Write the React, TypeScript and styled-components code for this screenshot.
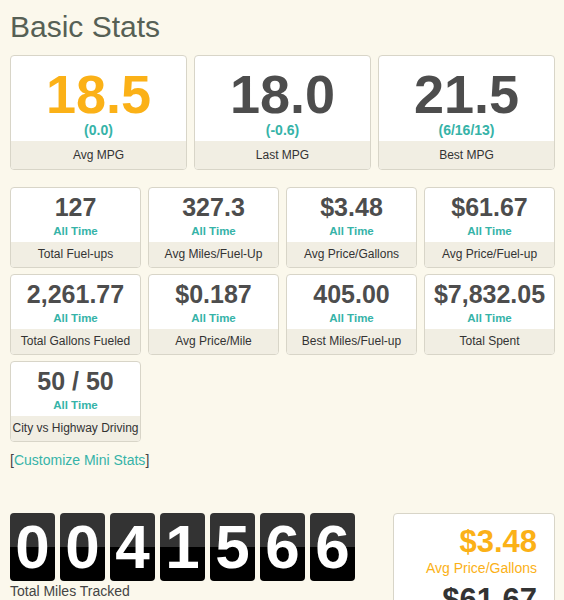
import React from "react";
import styled, { createGlobalStyle } from "styled-components";

const GlobalStyle = createGlobalStyle`
  html, body {
    margin: 0;
    padding: 0;
    background: #fbf8ec;
  }
  body {
    font-family: "Liberation Sans", Arial, sans-serif;
    color: #333;
  }
`;

const Page = styled.div`
  width: 545px;
  padding: 8px 10px 0 10px;
`;

const Title = styled.h1`
  margin: 0 0 9px 0;
  font-size: 30px;
  font-weight: normal;
  line-height: 38px;
  color: #566055;
`;

const BigGrid = styled.div`
  display: grid;
  grid-template-columns: repeat(3, 1fr);
  gap: 7px;
  margin-bottom: 17px;
`;

const SmallGrid = styled.div`
  display: grid;
  grid-template-columns: repeat(4, 1fr);
  gap: 6px 7px;
`;

const Card = styled.div`
  background: #fff;
  border: 1px solid #d8d5c8;
  border-radius: 4px;
  overflow: hidden;
  text-align: center;
  display: flex;
  flex-direction: column;
`;

const BigTop = styled.div`
  padding: 10px 0 3px;
`;

const BigValue = styled.div<{ $accent?: boolean }>`
  font-size: 54px;
  font-weight: bold;
  line-height: 56px;
  color: ${(p) => (p.$accent ? "#fbb117" : "#4d4d4d")};
`;

const BigSub = styled.div`
  font-size: 14px;
  font-weight: bold;
  line-height: 16px;
  color: #36b3a8;
`;

const SmallTop = styled.div`
  padding: 4px 0 2px;
`;

const SmallValue = styled.div`
  font-size: 25px;
  font-weight: bold;
  line-height: 30px;
  color: #4d4d4d;
`;

const SmallSub = styled.div`
  font-size: 11.5px;
  font-weight: bold;
  line-height: 18px;
  color: #36b3a8;
`;

const Label = styled.div<{ $h: number }>`
  background: #f1eee3;
  height: ${(p) => p.$h}px;
  line-height: ${(p) => p.$h}px;
  font-size: 12px;
  color: #333;
  white-space: nowrap;
`;

const Customize = styled.div`
  margin-top: 10px;
  font-size: 14px;
  line-height: 16px;
  color: #444;

  a {
    color: #36b3a8;
    text-decoration: none;
  }
`;

const BottomRow = styled.div`
  display: flex;
  justify-content: space-between;
  align-items: flex-start;
  margin-top: 45px;
`;

const Odometer = styled.div`
  display: flex;
  flex-direction: column;
`;

const Digits = styled.div`
  display: flex;
  gap: 5px;
`;

const Digit = styled.div`
  width: 45px;
  height: 68px;
  border-radius: 4px;
  background: linear-gradient(to bottom, #333 0, #333 50%, #000 50%, #000 100%);
  color: #fff;
  font-size: 62px;
  font-weight: bold;
  line-height: 68px;
  text-align: center;
`;

const OdoLabel = styled.div`
  font-size: 14px;
  line-height: 18px;
  margin-top: 1px;
  color: #444;
`;

const SideCard = styled.div`
  width: 143px;
  height: 120px;
  background: #fff;
  border: 1px solid #d8d5c8;
  border-radius: 4px;
  padding: 10px 17px 0 0;
  text-align: right;
`;

const SideValue = styled.div<{ $accent?: boolean }>`
  font-size: 31px;
  font-weight: bold;
  line-height: 36px;
  color: ${(p) => (p.$accent ? "#fbb117" : "#333")};
`;

const SideLabel = styled.div`
  font-size: 14px;
  line-height: 16px;
  color: #fbb117;
  margin-bottom: 6px;
`;

const bigStats = [
  { value: "18.5", sub: "(0.0)", label: "Avg MPG", accent: true },
  { value: "18.0", sub: "(-0.6)", label: "Last MPG" },
  { value: "21.5", sub: "(6/16/13)", label: "Best MPG" },
];

const miniStats = [
  { value: "127", label: "Total Fuel-ups" },
  { value: "327.3", label: "Avg Miles/Fuel-Up" },
  { value: "$3.48", label: "Avg Price/Gallons" },
  { value: "$61.67", label: "Avg Price/Fuel-up" },
  { value: "2,261.77", label: "Total Gallons Fueled" },
  { value: "$0.187", label: "Avg Price/Mile" },
  { value: "405.00", label: "Best Miles/Fuel-up" },
  { value: "$7,832.05", label: "Total Spent" },
  { value: "50 / 50", label: "City vs Highway Driving" },
];

const miles = "0041566";

export default function App() {
  return (
    <Page>
      <GlobalStyle />
      <Title>Basic Stats</Title>
      <BigGrid>
        {bigStats.map((s) => (
          <Card key={s.label}>
            <BigTop>
              <BigValue $accent={s.accent}>{s.value}</BigValue>
              <BigSub>{s.sub}</BigSub>
            </BigTop>
            <Label $h={28}>{s.label}</Label>
          </Card>
        ))}
      </BigGrid>
      <SmallGrid>
        {miniStats.map((s) => (
          <Card key={s.label}>
            <SmallTop>
              <SmallValue>{s.value}</SmallValue>
              <SmallSub>All Time</SmallSub>
            </SmallTop>
            <Label $h={25}>{s.label}</Label>
          </Card>
        ))}
      </SmallGrid>
      <Customize>
        [<a href="#">Customize Mini Stats</a>]
      </Customize>
      <BottomRow>
        <Odometer>
          <Digits>
            {miles.split("").map((d, i) => (
              <Digit key={i}>{d}</Digit>
            ))}
          </Digits>
          <OdoLabel>Total Miles Tracked</OdoLabel>
        </Odometer>
        <SideCard>
          <SideValue $accent>$3.48</SideValue>
          <SideLabel>Avg Price/Gallons</SideLabel>
          <SideValue>$61.67</SideValue>
        </SideCard>
      </BottomRow>
    </Page>
  );
}
